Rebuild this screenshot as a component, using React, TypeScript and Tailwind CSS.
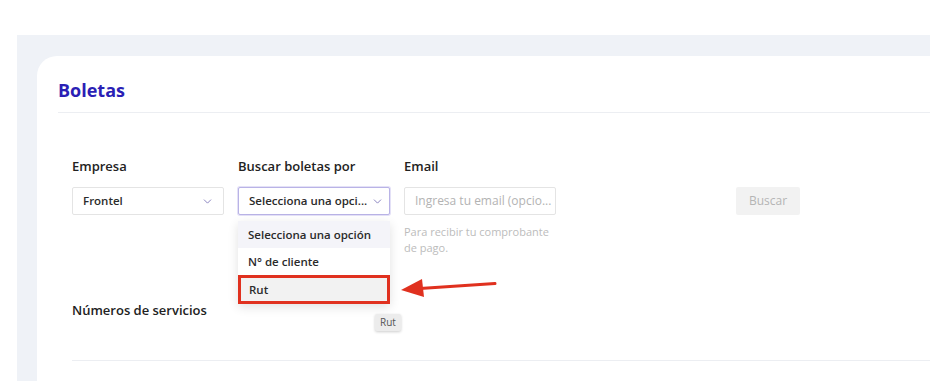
import { ChevronDown } from "lucide-react";

const font = { fontFamily: '"Open Sans", "Liberation Sans", sans-serif' };

function Select({ value, focused }: { value: string; focused?: boolean }) {
  return (
    <div
      className={`flex h-[28px] w-[152px] items-center justify-between rounded-[2px] border bg-white pl-[10px] pr-[9px] text-[11.5px] font-semibold text-[#2b2b2b] ${
        focused ? "border-[#b9b3e6] shadow-[0_0_0_1px_#e4e1f7]" : "border-[#e4e4e4]"
      }`}
    >
      <span className="whitespace-nowrap">{value}</span>
      <ChevronDown className="ml-1 h-[13px] w-[13px] shrink-0 text-[#7b74b8]" strokeWidth={1.6} />
    </div>
  );
}

export default function App() {
  return (
    <div className="h-[381px] w-[930px] overflow-hidden bg-white pl-[17px] pt-[35px]" style={font}>
      <div className="h-full bg-[#eff2f7] pl-[20px] pt-[21px]">
        <div className="h-full rounded-tl-[20px] bg-white pl-[21px] pt-[22px]">
          <h1 className="text-[18px] font-bold leading-[24px] text-[#2b1fb5]">Boletas</h1>
          <div className="mt-[10px] h-px bg-[#eceef2]" />

          <div className="pl-[14px] pt-[44px]">
            <div className="flex items-start">
              <div className="w-[166px]">
                <div className="text-[13px] font-semibold leading-[18px] text-[#222]">Empresa</div>
                <div className="mt-[12px]">
                  <Select value="Frontel" />
                </div>
              </div>

              <div className="relative w-[166px]">
                <div className="text-[13px] font-semibold leading-[18px] text-[#222]">Buscar boletas por</div>
                <div className="mt-[12px]">
                  <Select value="Selecciona una opci..." focused />
                </div>

                {/* open dropdown */}
                <div className="absolute left-0 top-[64px] z-10 w-[152px] bg-white text-[11.5px] font-semibold text-[#2b2b2b] shadow-[0_3px_10px_rgba(0,0,0,0.12)]">
                  <div className="flex h-[27px] items-center bg-[#f4f4f9] px-[10px]">Selecciona una opción</div>
                  <div className="flex h-[27px] items-center px-[10px]">N° de cliente</div>
                  <div className="flex h-[29px] items-center border-[3px] border-[#e0311f] bg-[#f2f2f2] px-[8px]">Rut</div>
                </div>

                {/* tooltip */}
                <div className="absolute left-[137px] top-[157px] z-20 rounded-[2px] bg-[#ececec] px-[5px] py-[1px] text-[10px] text-[#555] shadow-[0_1px_3px_rgba(0,0,0,0.2)]">
                  Rut
                </div>

                {/* red arrow */}
                <svg className="absolute left-[160px] top-[119px] z-20" width="100" height="24" viewBox="0 0 100 24">
                  <path d="M22 12.5 L97 7.5" stroke="#e0311f" strokeWidth="3" strokeLinecap="round" />
                  <path d="M3 14 L24 3 L26 21 Z" fill="#e0311f" />
                </svg>
              </div>

              <div className="w-[152px]">
                <div className="text-[13px] font-semibold leading-[18px] text-[#222]">Email</div>
                <div className="mt-[12px] flex h-[28px] w-[152px] items-center rounded-[2px] border border-[#e4e4e4] pl-[10px] text-[12px] font-medium text-[#b3b3b3]">
                  <span className="whitespace-nowrap">Ingresa tu email (opcio...</span>
                </div>
                <p className="mt-[9px] text-[11px] font-medium leading-[16px] text-[#bcbcbc]">
                  Para recibir tu comprobante
                  <br />
                  de pago.
                </p>
              </div>

              <div className="ml-[180px] pt-[30px]">
                <button className="h-[28px] w-[64px] rounded-[2px] bg-[#f2f2f2] text-[12px] font-medium text-[#b5b5b5]">
                  Buscar
                </button>
              </div>
            </div>

            <div className="mt-[45px] text-[13px] font-semibold leading-[18px] text-[#222]">Números de servicios</div>
            <div className="mt-[41px] h-px bg-[#eceef2]" />
          </div>
        </div>
      </div>
    </div>
  );
}
